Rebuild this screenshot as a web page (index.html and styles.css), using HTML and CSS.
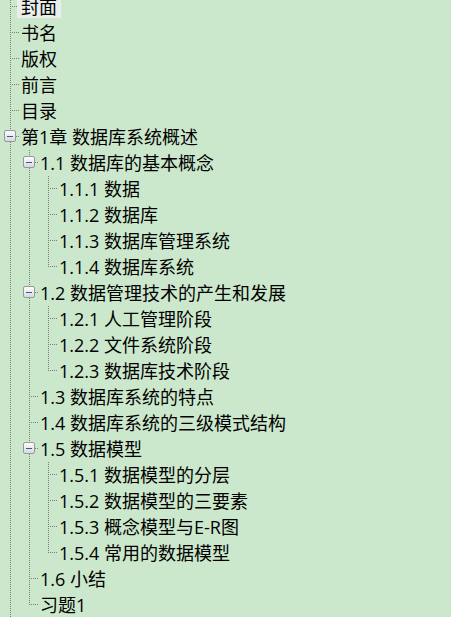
FILE: index.html
```html
<!DOCTYPE html>
<html lang="zh-CN">
<head>
<meta charset="utf-8">
<title>目录树</title>
<link rel="stylesheet" href="styles.css">
</head>
<body>
<div class="tree">
  <div class="row"><div class="g tee"></div><span class="label sel">封面</span></div>
  <div class="row"><div class="g tee"></div><span class="label">书名</span></div>
  <div class="row"><div class="g tee"></div><span class="label">版权</span></div>
  <div class="row"><div class="g tee"></div><span class="label">前言</span></div>
  <div class="row"><div class="g tee"></div><span class="label">目录</span></div>
  <div class="row"><div class="g tee"><div class="box"></div></div><span class="label">第1章 数据库系统概述</span></div>
  <div class="row"><div class="g pipe"></div><div class="g tee"><div class="box"></div></div><span class="label">1.1 数据库的基本概念</span></div>
  <div class="row"><div class="g pipe"></div><div class="g pipe"></div><div class="g tee"></div><span class="label">1.1.1 数据</span></div>
  <div class="row"><div class="g pipe"></div><div class="g pipe"></div><div class="g tee"></div><span class="label">1.1.2 数据库</span></div>
  <div class="row"><div class="g pipe"></div><div class="g pipe"></div><div class="g tee"></div><span class="label">1.1.3 数据库管理系统</span></div>
  <div class="row"><div class="g pipe"></div><div class="g pipe"></div><div class="g elbow"></div><span class="label">1.1.4 数据库系统</span></div>
  <div class="row"><div class="g pipe"></div><div class="g tee"><div class="box"></div></div><span class="label">1.2 数据管理技术的产生和发展</span></div>
  <div class="row"><div class="g pipe"></div><div class="g pipe"></div><div class="g tee"></div><span class="label">1.2.1 人工管理阶段</span></div>
  <div class="row"><div class="g pipe"></div><div class="g pipe"></div><div class="g tee"></div><span class="label">1.2.2 文件系统阶段</span></div>
  <div class="row"><div class="g pipe"></div><div class="g pipe"></div><div class="g elbow"></div><span class="label">1.2.3 数据库技术阶段</span></div>
  <div class="row"><div class="g pipe"></div><div class="g tee"></div><span class="label">1.3 数据库系统的特点</span></div>
  <div class="row"><div class="g pipe"></div><div class="g tee"></div><span class="label">1.4 数据库系统的三级模式结构</span></div>
  <div class="row"><div class="g pipe"></div><div class="g tee"><div class="box"></div></div><span class="label">1.5 数据模型</span></div>
  <div class="row"><div class="g pipe"></div><div class="g pipe"></div><div class="g tee"></div><span class="label">1.5.1 数据模型的分层</span></div>
  <div class="row"><div class="g pipe"></div><div class="g pipe"></div><div class="g tee"></div><span class="label">1.5.2 数据模型的三要素</span></div>
  <div class="row"><div class="g pipe"></div><div class="g pipe"></div><div class="g tee"></div><span class="label">1.5.3 概念模型与E-R图</span></div>
  <div class="row"><div class="g pipe"></div><div class="g pipe"></div><div class="g elbow"></div><span class="label">1.5.4 常用的数据模型</span></div>
  <div class="row"><div class="g pipe"></div><div class="g tee"></div><span class="label">1.6 小结</span></div>
  <div class="row"><div class="g pipe"></div><div class="g elbow"></div><span class="label">习题1</span></div>
</div>
</body>
</html>
```
FILE: styles.css
```css
html, body {
  margin: 0;
  padding: 0;
  background: #cce8cc;
  overflow: hidden;
}

body {
  font-family: "Open Sans", "Noto Sans CJK SC", sans-serif;
  font-size: 18px;
  color: #000;
  --v: repeating-linear-gradient(to bottom, #7c7c7c 0 1px, transparent 1px 2px);
  --h: repeating-linear-gradient(to right, #7c7c7c 0 1px, transparent 1px 2px);
}

.tree {
  margin-top: -6px;
}

.row {
  display: flex;
  align-items: center;
  height: 26px;
}

.g {
  flex: none;
  width: 19px;
  height: 26px;
}

.pipe {
  background: var(--v) 10px 0 / 1px 26px no-repeat;
}

.tee {
  background:
    var(--v) 10px 0 / 1px 26px no-repeat,
    var(--h) 12px 12px / 7px 1px no-repeat;
}

.elbow {
  background:
    var(--v) 10px 0 / 1px 13px no-repeat,
    var(--h) 12px 12px / 7px 1px no-repeat;
}

.box {
  box-sizing: border-box;
  width: 12px;
  height: 12px;
  margin: 6px 0 0 4px;
  border: 1px solid #989898;
  border-radius: 2px;
  background: linear-gradient(#fdfdfd, #d9d9d9);
  display: flex;
  align-items: center;
  justify-content: center;
}

.box::before {
  content: "";
  width: 6px;
  height: 1px;
  background: #2c57b0;
}

.label {
  margin-left: -2px;
  padding: 0 4px;
  line-height: 22px;
  height: 22px;
  white-space: nowrap;
}

.sel {
  background: #e9eee9;
}
```
